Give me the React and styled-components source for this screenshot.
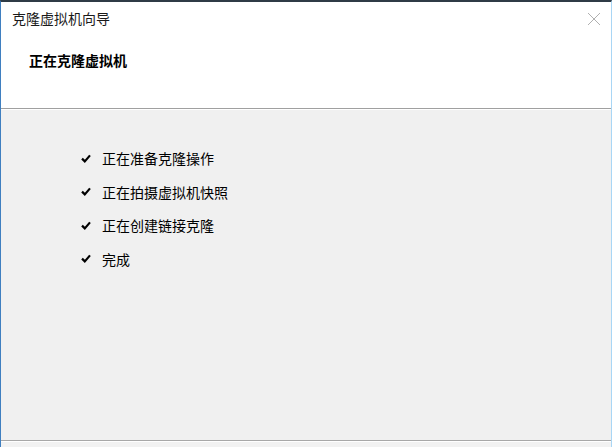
import React from "react";
import styled, { createGlobalStyle } from "styled-components";

const Global = createGlobalStyle`
  html, body { margin: 0; padding: 0; background: #f0f0f0; }
  body { font-family: "Noto Sans CJK SC", "Microsoft YaHei", sans-serif; }
`;

const Window = styled.div`
  width: 612px;
  height: 447px;
  box-sizing: border-box;
  border-top: 2px solid #2f3b46;
  border-left: 1px solid #3f7fc0;
  border-right: 1px solid #a9d6f5;
  display: flex;
  flex-direction: column;
  background: #f0f0f0;
  overflow: hidden;
`;

const Header = styled.div`
  background: #ffffff;
  height: 106px;
  position: relative;
  display: flex;
  flex-direction: column;
  border-bottom: 1px solid #a0a0a0;
`;

const TitleBar = styled.div`
  height: 32px;
  display: flex;
  align-items: center;
  padding-left: 11px;
  font-size: 14px;
  color: #1a1a1a;
`;

const Close = styled.div`
  position: absolute;
  top: 10px;
  right: 10px;
  width: 14px;
  height: 14px;
  display: flex;
`;

const Subtitle = styled.div`
  margin-top: 16px;
  padding-left: 28px;
  font-size: 14px;
  font-weight: 700;
  color: #000;
`;

const Divider = styled.div`
  height: 1px;
  background: #ffffff;
`;

const Body = styled.div`
  flex: 1;
  padding: 38px 0 0 80px;
  display: flex;
  flex-direction: column;
  gap: 13.5px;
`;

const Item = styled.div`
  display: flex;
  align-items: center;
  height: 20px;
  font-size: 14px;
  color: #000;
`;

const Check = styled.span`
  width: 21px;
  display: inline-flex;
  align-items: center;
`;

const Footer = styled.div`
  height: 6px;
  border-top: 1px solid #a8a8a8;
  background: #f2f2f2;
  box-shadow: inset 0 1px 0 #ffffff;
`;

const CheckIcon = () => (
  <svg width="10" height="9" viewBox="0 0 10 9">
    <path d="M1 4.6 L3.8 7.4 L9 1.4" fill="none" stroke="#000" strokeWidth="2.2" strokeLinejoin="miter" />
  </svg>
);

const steps = ["正在准备克隆操作", "正在拍摄虚拟机快照", "正在创建链接克隆", "完成"];

export default function App() {
  return (
    <>
      <Global />
      <Window>
        <Header>
          <TitleBar>克隆虚拟机向导</TitleBar>
          <Close>
            <svg width="14" height="14" viewBox="0 0 14 14">
              <path d="M1 1 L13 13 M13 1 L1 13" stroke="#b0b0b0" strokeWidth="1" />
            </svg>
          </Close>
          <Subtitle>正在克隆虚拟机</Subtitle>
        </Header>
        <Divider />
        <Body>
          {steps.map((s) => (
            <Item key={s}>
              <Check><CheckIcon /></Check>
              {s}
            </Item>
          ))}
        </Body>
        <Footer />
      </Window>
    </>
  );
}
